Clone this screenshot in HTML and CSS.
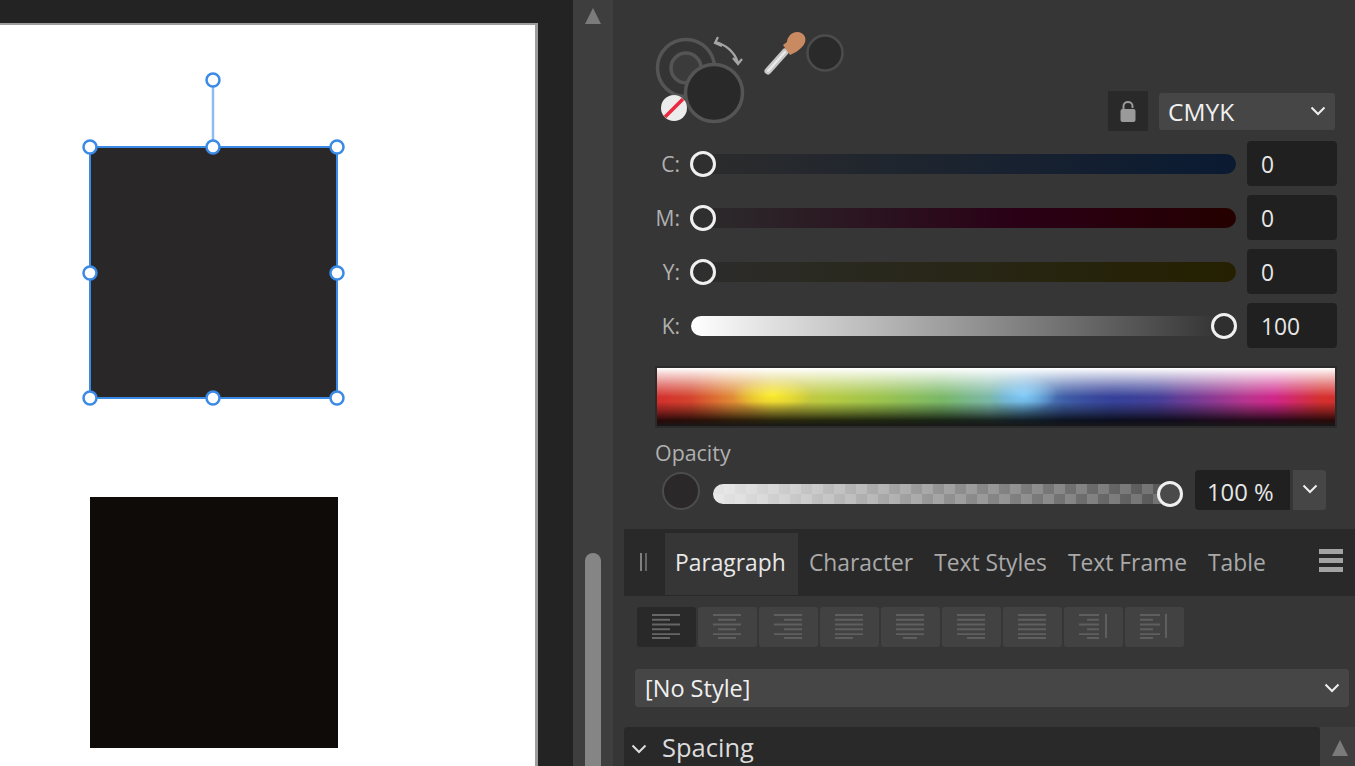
FILE: index.html
```html
<!DOCTYPE html>
<html lang="en">
<head>
<meta charset="utf-8">
<title>Colour panel</title>
<link rel="stylesheet" href="styles.css">
</head>
<body>
<div class="app">
  <main class="canvas">
    <div class="page"></div>
    <div class="shape shape-selected"></div>
    <div class="shape shape-black"></div>
    <svg class="selection" width="360" height="420" viewBox="0 0 360 420">
      <path d="M213 80V147" stroke="#8dbcf0" stroke-width="2.500" fill="none"/>
      <g fill="#fff" stroke="#3a8ae6" stroke-width="2.500">
        <circle cx="213" cy="80" r="6.500"/>
        <circle cx="90" cy="147" r="6.500"/>
        <circle cx="213" cy="147" r="6.500"/>
        <circle cx="337" cy="147" r="6.500"/>
        <circle cx="90" cy="273" r="6.500"/>
        <circle cx="337" cy="273" r="6.500"/>
        <circle cx="90" cy="398" r="6.500"/>
        <circle cx="213" cy="398" r="6.500"/>
        <circle cx="337" cy="398" r="6.500"/>
      </g>
    </svg>
  </main>

  <aside class="vscroll">
    <svg class="arrow" width="16" height="16" viewBox="0 0 16 16"><path d="M8 0L16 16H0Z" fill="#7b7b7b"/></svg>
    <div class="thumb"></div>
  </aside>

  <section class="panel">
    <div class="colour">
      <div class="colour-top">
        <svg class="wells" width="190" height="112" viewBox="0 0 190 112">
          <circle cx="31" cy="56" r="28.500" fill="#343434" stroke="#555" stroke-width="3.500"/>
          <circle cx="31" cy="56" r="15" fill="#3b3b3b" stroke="#555" stroke-width="3.500"/>
          <circle cx="59" cy="81" r="28.500" fill="#292929" stroke="#555" stroke-width="3.500"/>
          <circle cx="19" cy="96" r="13" fill="#ececec"/>
          <path d="M10 105L28 87" stroke="#e8293f" stroke-width="3.500"/>
          <path d="M60 30C70 32 80 40 83 51M63 25L60 31L67 34M78 46L83 52L87 47" fill="none" stroke="#a5a5a5" stroke-width="2.200"/>
          <path d="M113 59L130 40" stroke="#c8c8c8" stroke-width="7" stroke-linecap="round"/>
          <path d="M113 59L130 40" stroke="#ececec" stroke-width="2" stroke-linecap="round"/>
          <path d="M128 33L135 43L141 40C147 36 152 31 150 25C148 20 142 19 138 21C134 23 132 27 132 30Z" fill="#c98a62"/>
          <circle cx="170" cy="41" r="17.500" fill="#2a2a2a" stroke="#4c4c4c" stroke-width="2.500"/>
        </svg>
        <div class="model">
          <div class="lock">
            <svg width="16" height="24" viewBox="0 0 16 24"><path d="M3.500 11V7C3.500 1.500 12.500 1.500 12.500 7V9" fill="none" stroke="#9a9a9a" stroke-width="2"/><rect x="0.500" y="10" width="15" height="13" rx="2" fill="#9a9a9a"/></svg>
          </div>
          <div class="select select-model">
            <span>CMYK</span>
            <svg class="chev" width="16" height="10" viewBox="0 0 16 10"><path d="M1.500 1.500L8 8L14.500 1.500" fill="none" stroke="#eee" stroke-width="2"/></svg>
          </div>
        </div>
      </div>

      <div class="slider-row">
        <span class="slider-label">C:</span>
        <div class="track track-c"><i class="knob knob-start"></i></div>
        <div class="num">0</div>
      </div>
      <div class="slider-row">
        <span class="slider-label">M:</span>
        <div class="track track-m"><i class="knob knob-start"></i></div>
        <div class="num">0</div>
      </div>
      <div class="slider-row">
        <span class="slider-label">Y:</span>
        <div class="track track-y"><i class="knob knob-start"></i></div>
        <div class="num">0</div>
      </div>
      <div class="slider-row">
        <span class="slider-label">K:</span>
        <div class="track track-k"><i class="knob knob-end"></i></div>
        <div class="num">100</div>
      </div>

      <div class="spectrum"></div>

      <div class="opacity-label">Opacity</div>
      <div class="opacity-row">
        <div class="opacity-well"></div>
        <div class="track track-o"><i class="knob knob-o"></i></div>
        <div class="pct">100 %</div>
        <div class="pct-btn"><svg width="16" height="10" viewBox="0 0 16 10"><path d="M1.500 1.500L8 8L14.500 1.500" fill="none" stroke="#eee" stroke-width="2"/></svg></div>
      </div>
    </div>

    <nav class="tabs">
      <div class="grip"></div>
      <div class="tab tab-active">Paragraph</div>
      <div class="tab">Character</div>
      <div class="tab">Text Styles</div>
      <div class="tab">Text Frame</div>
      <div class="tab">Table</div>
      <div class="burger"><i></i><i></i><i></i></div>
    </nav>

    <div class="align-row">
      <div class="al al-on"><svg width="28" height="26" viewBox="0 0 28 26"><path d="M0 2H28M0 7H18M0 12H28M0 17H18M0 22H28M0 26H18" transform="scale(1 .96)"/></svg></div>
      <div class="al"><svg width="28" height="26" viewBox="0 0 28 26"><path d="M0 2H28M5 7H23M0 12H28M5 17H23M0 22H28M5 26H23" transform="scale(1 .96)"/></svg></div>
      <div class="al"><svg width="28" height="26" viewBox="0 0 28 26"><path d="M0 2H28M10 7H28M0 12H28M10 17H28M0 22H28M10 26H28" transform="scale(1 .96)"/></svg></div>
      <div class="al"><svg width="28" height="26" viewBox="0 0 28 26"><path d="M0 2H28M0 7H28M0 12H28M0 17H28M0 22H28M0 26H18" transform="scale(1 .96)"/></svg></div>
      <div class="al"><svg width="28" height="26" viewBox="0 0 28 26"><path d="M0 2H28M0 7H28M0 12H28M0 17H28M0 22H28M7 26H21" transform="scale(1 .96)"/></svg></div>
      <div class="al"><svg width="28" height="26" viewBox="0 0 28 26"><path d="M0 2H28M0 7H28M0 12H28M0 17H28M0 22H28M10 26H28" transform="scale(1 .96)"/></svg></div>
      <div class="al"><svg width="28" height="26" viewBox="0 0 28 26"><path d="M0 2H28M0 7H28M0 12H28M0 17H28M0 22H28M0 26H28" transform="scale(1 .96)"/></svg></div>
      <div class="al"><svg width="28" height="26" viewBox="0 0 28 26"><path d="M0 2H20M8 7H20M0 12H20M8 17H20M0 22H20M8 26H20M27 1V26" transform="scale(1 .96)"/></svg></div>
      <div class="al"><svg width="28" height="26" viewBox="0 0 28 26"><path d="M0 2H20M0 7H13M0 12H20M0 17H13M0 22H20M0 26H13M26 1V26" transform="scale(1 .96)"/></svg></div>
    </div>

    <div class="select select-style">
      <span>[No Style]</span>
      <svg class="chev" width="16" height="10" viewBox="0 0 16 10"><path d="M1.500 1.500L8 8L14.500 1.500" fill="none" stroke="#eee" stroke-width="2"/></svg>
    </div>

    <div class="spacing-row">
      <div class="spacing">
        <svg width="16" height="10" viewBox="0 0 16 10"><path d="M1.500 1.500L8 8L14.500 1.500" fill="none" stroke="#ddd" stroke-width="2"/></svg>
        <span>Spacing</span>
      </div>
      <div class="panel-scroll">
        <svg width="16" height="16" viewBox="0 0 16 16"><path d="M8 0L16 16H0Z" fill="#7b7b7b"/></svg>
      </div>
    </div>
  </section>
</div>
</body>
</html>
```

FILE: styles.css
```css
* { box-sizing: border-box; }

html, body {
  margin: 0;
  height: 100%;
  overflow: hidden;
  background: #363636;
}

body {
  font-family: "Open Sans", "Noto Sans", sans-serif;
  font-size: 22.800px;
  color: #e6e6e6;
}

.app {
  display: flex;
  width: 1355px;
  height: 766px;
  overflow: hidden;
}

/* Canvas */
.canvas {
  position: relative;
  width: 573px;
  height: 766px;
  flex: none;
  background: #232323;
  overflow: hidden;
}

.page {
  position: absolute;
  left: -3px;
  top: 23px;
  width: 541px;
  height: 760px;
  background: #fff;
  border: 3px solid #9d9d9d;
  border-width: 2px 3px 0 0;
}

.shape { position: absolute; }

.shape-selected {
  left: 88.500px;
  top: 146px;
  width: 249.500px;
  height: 253px;
  background: #2a2729;
  border: solid #3a8ae6;
  border-width: 2px 2.500px;
}

.shape-black {
  left: 90px;
  top: 497px;
  width: 247.500px;
  height: 250.500px;
  background: #0f0b08;
}

.selection {
  position: absolute;
  left: 0;
  top: 0;
}

/* Main vertical scrollbar */
.vscroll {
  width: 40px;
  height: 766px;
  flex: none;
  background: #3e3e3e;
  padding: 8px 12px 0;
}

.arrow { display: block; }

.thumb {
  width: 16px;
  height: 300px;
  margin-top: 529px;
  border-radius: 8px 8px 0 0;
  background: #858585;
}

/* Panel */
.panel {
  flex: 1;
  min-width: 0;
  height: 766px;
  background: #363636;
  padding-left: 11px;
  overflow: hidden;
}

.colour {
  height: 505px;
  padding: 0 18px 0 31px;
}

.colour-top {
  display: flex;
  justify-content: space-between;
  height: 132px;
  padding-top: 12px;
  padding-right: 2px;
}

.wells { display: block; flex: none; }

.model {
  display: flex;
  align-items: center;
  gap: 11px;
  height: 40px;
  margin-top: 79px;
}

.lock {
  width: 40px;
  height: 40px;
  background: #292929;
  display: flex;
  align-items: center;
  justify-content: center;
}

.select {
  display: flex;
  align-items: center;
  justify-content: space-between;
  background: #464646;
  border-radius: 3px;
  color: #f0f0f0;
}

.select-model {
  width: 176px;
  height: 37px;
  padding: 0 9px;
  font-size: 24.500px;
}

.slider-row {
  display: flex;
  align-items: center;
  height: 54px;
}

.slider-row:nth-child(2) { margin-top: 5px; }

.slider-label {
  width: 25px;
  text-align: right;
  color: #b0b0b0;
  font-size: 21px;
  line-height: 26px;
  flex: none;
}

.track {
  position: relative;
  height: 20px;
  border-radius: 10px;
  flex: none;
}

.slider-row .track {
  width: 545px;
  margin-left: 11px;
  margin-right: 11px;
}

.track-c { background: linear-gradient(90deg, #2c2c2c, #0a1a32); }
.track-m { background: linear-gradient(90deg, #2c2c2c, #2a0016 60%, #240000); }
.track-y { background: linear-gradient(90deg, #2c2c2c, #242000); }
.track-k { background: linear-gradient(90deg, #fff, #2e2e2e); }

.knob {
  position: absolute;
  top: -3px;
  width: 26px;
  height: 26px;
  border-radius: 50%;
  background: #2f2f2f;
  border: 3.500px solid #f0f0f0;
}

.knob-start { left: -1px; }
.knob-end { right: -1px; }

.num {
  width: 90px;
  height: 45px;
  margin-top: -1px;
  background: #202020;
  border-radius: 4px;
  padding-left: 14px;
  line-height: 47px;
  flex: none;
}

.spectrum {
  width: 682px;
  height: 62px;
  margin-top: 13px;
  border: 2px solid #2b2b2b;
  background:
    linear-gradient(180deg, #fff 0%, rgba(255,255,255,.78) 10%, rgba(255,255,255,.36) 30%, rgba(255,255,255,0) 50%, rgba(0,0,0,0) 58%, rgba(0,0,0,.42) 76%, rgba(0,0,0,.8) 90%, #181818 100%),
    radial-gradient(ellipse 6% 30% at 17% 46%, rgba(255,240,40,.9), rgba(255,240,40,0)),
    radial-gradient(ellipse 5% 32% at 54% 46%, rgba(130,205,250,.95), rgba(130,205,250,0)),
    radial-gradient(ellipse 9% 40% at 68% 38%, rgba(50,60,150,.8), rgba(50,60,150,0)),
    linear-gradient(90deg, #d32f2d 0%, #d4442d 5%, #e08a35 11%, #d8c23c 17%, #b8cb42 25%, #9cc34e 33%, #7ab868 42%, #7cb8a8 49%, #5e9ecb 54%, #4060a8 60%, #3a479c 67%, #4a3f98 74%, #8c3a93 82%, #b8358e 87%, #d0278b 91%, #d5302e 98%);
}

.opacity-label {
  margin-top: 11px;
  color: #b0b0b0;
  font-size: 21.400px;
  line-height: 27px;
}

.opacity-row {
  display: flex;
  align-items: flex-start;
  margin-top: 4px;
  padding-left: 7px;
}

.opacity-well {
  width: 38px;
  height: 38px;
  margin-top: 2px;
  border-radius: 50%;
  background: #2a2829;
  border: 2px solid #4c4c4c;
  flex: none;
}

.track-o {
  width: 457px;
  margin: 14px 25px 0 13px;
  background:
    linear-gradient(90deg, rgba(255,255,255,.85) 0%, rgba(255,255,255,.36) 50%, rgba(255,255,255,0) 100%),
    repeating-conic-gradient(#707070 0 25%, #565656 0 50%) 0 0 / 22px 20px;
  border-radius: 10px 0 0 10px;
}

.knob-o {
  right: -13px;
  background: #4a4a4a;
}

.pct {
  width: 95px;
  height: 40px;
  background: #202020;
  border-radius: 4px 0 0 4px;
  padding-left: 12px;
  line-height: 44px;
  font-size: 23.800px;
  color: #e6e6e6;
  flex: none;
}

.pct-btn {
  width: 33px;
  height: 40px;
  margin-left: 3px;
  padding-bottom: 3px;
  background: #464646;
  border-radius: 0 3px 3px 0;
  display: flex;
  align-items: center;
  justify-content: center;
}

/* Tabs */
.tabs {
  display: flex;
  height: 67px;
  margin-top: 24px;
  padding-top: 4px;
  background: #292929;
}

.grip {
  width: 41px;
  position: relative;
  flex: none;
}

.grip::before {
  content: "";
  position: absolute;
  left: 16px;
  top: 20px;
  width: 3px;
  height: 18px;
  border-left: 2px solid #808080;
  border-right: 2px solid #666;
}

.tab {
  height: 62px;
  padding: 0 10px;
  line-height: 59px;
  color: #a9a9a9;
  white-space: nowrap;
  flex: none;
  margin-right: 1px;
}

.tab-active {
  width: 133px;
  background: #363636;
  color: #e8e8e8;
}

.burger {
  margin-left: auto;
  margin-right: 12px;
  margin-top: 16px;
  width: 24px;
  display: flex;
  flex-direction: column;
  gap: 4px;
}

.burger i {
  display: block;
  height: 5px;
  background: #a3a3a3;
}

/* Alignment */
.align-row {
  display: flex;
  gap: 2px;
  margin: 11px 0 0 13px;
}

.al {
  width: 59px;
  height: 40px;
  padding: 0 1px 2px 0;
  background: #424242;
  border-radius: 3px;
  display: flex;
  align-items: center;
  justify-content: center;
}

.al svg { fill: none; stroke: #5f5f5f; stroke-width: 2; }
.al-on { background: #292929; }
.al-on svg { stroke: #666; }

.select-style {
  width: 714px;
  height: 38px;
  margin: 22px 0 0 11px;
  padding: 0 9px 0 10px;
  font-size: 23.500px;
}

.spacing-row {
  display: flex;
  margin-top: 20px;
  height: 60px;
}

.spacing {
  width: 696px;
  background: #292929;
  border-radius: 4px 4px 0 0;
  display: flex;
  align-items: flex-start;
  padding: 3px 0 0 7px;
  color: #dcdcdc;
  font-size: 25.500px;
}

.spacing svg { margin-top: 14px; }
.spacing span { margin-left: 15px; }

.panel-scroll {
  width: 35px;
  background: #3e3e3e;
  display: flex;
  justify-content: center;
  padding: 13px 0 0 5px;
}
```
